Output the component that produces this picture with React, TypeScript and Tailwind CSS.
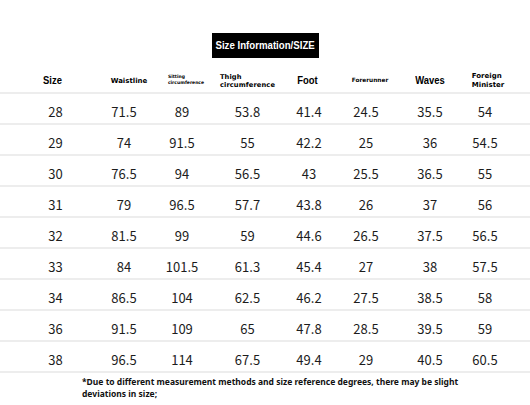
const cols = 'grid grid-cols-[69px_68px_48px_83px_40px_74px_54px_56px] pl-[21px]'

const rows = [
  ['28', '71.5', '89', '53.8', '41.4', '24.5', '35.5', '54'],
  ['29', '74', '91.5', '55', '42.2', '25', '36', '54.5'],
  ['30', '76.5', '94', '56.5', '43', '25.5', '36.5', '55'],
  ['31', '79', '96.5', '57.7', '43.8', '26', '37', '56'],
  ['32', '81.5', '99', '59', '44.6', '26.5', '37.5', '56.5'],
  ['33', '84', '101.5', '61.3', '45.4', '27', '38', '57.5'],
  ['34', '86.5', '104', '62.5', '46.2', '27.5', '38.5', '58'],
  ['36', '91.5', '109', '65', '47.8', '28.5', '39.5', '59'],
  ['38', '96.5', '114', '67.5', '49.4', '29', '40.5', '60.5'],
]

// narrow bold look: no condensed face installed, so squeeze Liberation Sans a little
const bold = "inline-block font-['Liberation_Sans',sans-serif] font-bold leading-none whitespace-nowrap"
const big = `${bold} text-[11.5px] scale-x-[0.82]`
const small = "font-['DejaVu_Sans',sans-serif] font-bold"

export default function App() {
  return (
    <div className="w-[530px] h-[405px] bg-white text-black overflow-hidden pt-[33px]">
      <div className="mx-auto w-[107px] h-[25px] bg-black text-white flex items-center justify-center">
        <span className={`${bold} text-[11.5px] scale-x-[0.84]`}>Size Information/SIZE</span>
      </div>

      {/* header */}
      <div className={`${cols} h-[36px] pt-[12px] items-center border-b-2 border-[#ededed]`}>
        <div className="flex justify-center">
          <span className={`${big} -translate-x-[3px]`}>Size</span>
        </div>
        <div className="flex justify-center">
          <span className={`${small} text-[7px] leading-none translate-x-[5px]`}>Waistline</span>
        </div>
        <div className="flex justify-center">
          <span className={`${small} text-[4.5px] leading-[6.5px] translate-x-[4px] -translate-y-[1px]`}>
            Sitting
            <br />
            circumference
          </span>
        </div>
        <div className="flex justify-center">
          <span className={`${small} text-[6.7px] leading-[8.5px] tracking-[0.1px]`}>
            Thigh
            <br />
            circumference
          </span>
        </div>
        <div className="flex justify-center">
          <span className={`${big} -translate-x-[2px]`}>Foot</span>
        </div>
        <div className="flex justify-center">
          <span className={`${small} text-[5.8px] leading-none translate-x-[4px]`}>Forerunner</span>
        </div>
        <div className="flex justify-center">
          <span className={big}>Waves</span>
        </div>
        <div className="flex justify-center">
          <span className={`${small} text-[7px] leading-[9px] translate-x-[3px]`}>
            Foreign
            <br />
            Minister
          </span>
        </div>
      </div>

      {/* data */}
      {rows.map((r) => (
        <div
          key={r[0]}
          className={`${cols} h-[31px] pt-[5px] items-center border-b-2 border-[#ededed] font-['Noto_Sans_CJK_SC','Noto_Sans',sans-serif] text-[13px] leading-none text-[#1c1c1c]`}
        >
          {r.map((v, i) => (
            <div key={i} className="text-center">
              {v}
            </div>
          ))}
        </div>
      ))}

      <p className="pl-[82px] pt-[3px] w-[480px] font-['Noto_Sans',sans-serif] font-bold text-[8.5px] leading-[12px] text-[#111]">
        *Due to different measurement methods and size reference degrees, there may be slight deviations in size;
      </p>
    </div>
  )
}
